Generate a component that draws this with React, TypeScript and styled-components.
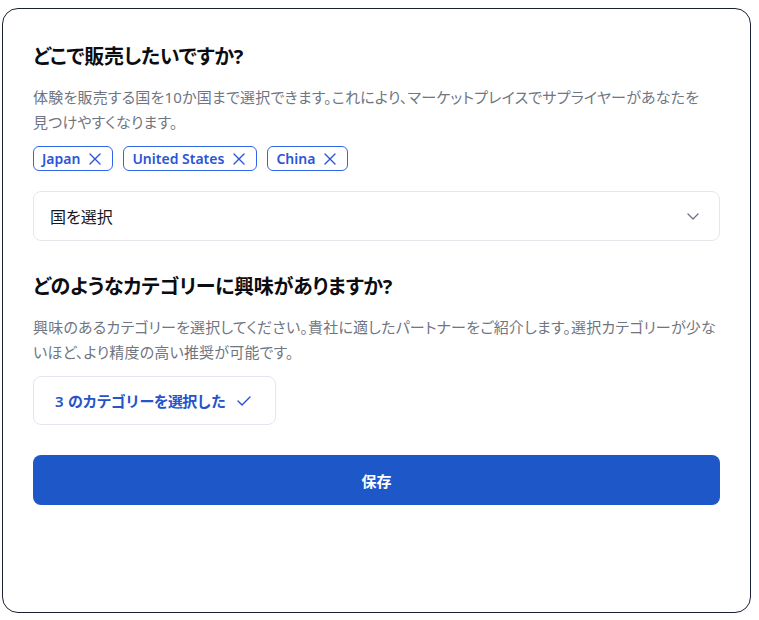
import React from 'react';
import styled, { createGlobalStyle } from 'styled-components';

const GlobalStyle = createGlobalStyle`
    html, body {
        margin: 0;
        padding: 0;
        background: #ffffff;
    }
    body {
        font-family: "Noto Sans", "Noto Sans CJK JP", sans-serif;
        font-feature-settings: "palt";
        -webkit-font-smoothing: antialiased;
    }
`;

const Page = styled.div`
    padding: 8px 0 0 2px;
`;

const Card = styled.div`
    box-sizing: border-box;
    width: 749px;
    height: 605px;
    border: 1px solid #1b2035;
    border-radius: 16px;
    padding: 34px 30px 0 30px;
    display: flex;
    flex-direction: column;
`;

const Heading = styled.h2<{ $top?: number }>`
    margin: ${props => props.$top ?? 0}px 0 0 0;
    font-size: 20px;
    line-height: 28px;
    font-weight: 700;
    letter-spacing: -0.3px;
    color: #0b0d12;
`;

const Description = styled.p`
    margin: 14px 0 0 0;
    font-size: 15px;
    line-height: 25px;
    letter-spacing: 0.2px;
    color: #6f7682;
`;

const Line = styled.span`
    display: block;
    white-space: nowrap;
`;

const ChipRow = styled.div`
    display: flex;
    gap: 10px;
    margin-top: 11px;
`;

const Chip = styled.span`
    box-sizing: border-box;
    height: 25px;
    display: inline-flex;
    align-items: center;
    gap: 9px;
    padding: 0 11px 0 8px;
    border: 1px solid #2f66e8;
    border-radius: 6px;
    font-size: 14px;
    font-weight: 600;
    color: #2b55d6;
`;

const Select = styled.div`
    box-sizing: border-box;
    height: 50px;
    margin-top: 20px;
    display: flex;
    align-items: center;
    justify-content: space-between;
    padding: 0 20px 0 16px;
    border: 1px solid #e4e7ec;
    border-radius: 8px;
    font-size: 16px;
    color: #16181d;
`;

const CategoryButton = styled.button`
    box-sizing: border-box;
    align-self: flex-start;
    height: 49px;
    margin-top: 11px;
    display: inline-flex;
    align-items: center;
    gap: 12px;
    padding: 0 24px 0 21px;
    background: #ffffff;
    border: 1px solid #e2e6ee;
    border-radius: 8px;
    font-family: inherit;
    font-size: 15px;
    font-weight: 600;
    letter-spacing: -0.7px;
    color: #2753c9;
`;

const Count = styled.span`
    margin-right: 5px;
`;

const SaveButton = styled.button`
    box-sizing: border-box;
    height: 50px;
    margin-top: 30px;
    border: none;
    border-radius: 8px;
    background: #1e58c8;
    color: #ffffff;
    font-family: inherit;
    font-size: 15px;
    font-weight: 700;
`;

const CloseIcon = () => (
    <svg width="12" height="12" viewBox="0 0 12 12" fill="none" stroke="#2b55d6" strokeWidth="1.4" strokeLinecap="round">
        <path d="M1 1L11 11M11 1L1 11" />
    </svg>
);

const ChevronIcon = () => (
    <svg width="12" height="7" viewBox="0 0 12 7" fill="none" stroke="#6b7280" strokeWidth="1.3" strokeLinecap="round" strokeLinejoin="round">
        <path d="M1 1L6 6L11 1" />
    </svg>
);

const CheckIcon = () => (
    <svg width="14" height="10" viewBox="0 0 14 10" fill="none" stroke="#2753c9" strokeWidth="1.4" strokeLinecap="round" strokeLinejoin="round">
        <path d="M1 5L5 9L13 1" />
    </svg>
);

const countries = ['Japan', 'United States', 'China'];

export default function App() {
    return (
        <Page>
            <GlobalStyle />
            <Card>
                <Heading>どこで販売したいですか?</Heading>
                <Description>
                    <Line>体験を販売する国を10か国まで選択できます。これにより、マーケットプレイスでサプライヤーがあなたを</Line>
                    <Line>見つけやすくなります。</Line>
                </Description>
                <ChipRow>
                    {countries.map(country => (
                        <Chip key={country}>
                            {country}
                            <CloseIcon />
                        </Chip>
                    ))}
                </ChipRow>
                <Select>
                    <span>国を選択</span>
                    <ChevronIcon />
                </Select>

                <Heading $top={32}>どのようなカテゴリーに興味がありますか?</Heading>
                <Description>
                    <Line>興味のあるカテゴリーを選択してください。貴社に適したパートナーをご紹介します。選択カテゴリーが少な</Line>
                    <Line>いほど、より精度の高い推奨が可能です。</Line>
                </Description>
                <CategoryButton>
                    <span>
                        <Count>3</Count>のカテゴリーを選択した
                    </span>
                    <CheckIcon />
                </CategoryButton>

                <SaveButton>保存</SaveButton>
            </Card>
        </Page>
    );
}
